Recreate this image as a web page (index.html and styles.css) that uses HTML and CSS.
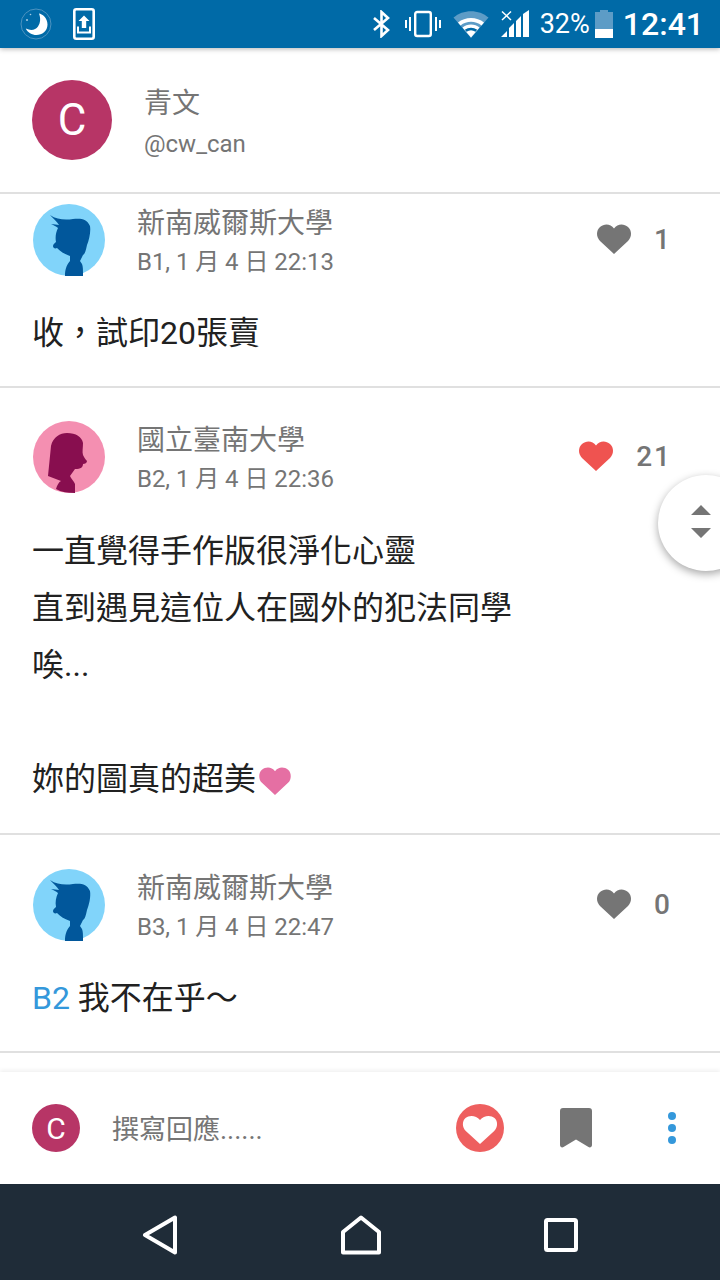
FILE: index.html
```html
<!DOCTYPE html>
<html lang="zh-Hant">

<head>
    <meta charset="UTF-8" />
    <meta name="viewport" content="width=device-width, initial-scale=1.0" />
    <title>青文</title>
    <link rel="stylesheet" href="styles.css">
</head>

<body>
    <div class="screen">
        <div class="status-bar">
            <div class="status-left">
                <svg class="ico-moon" width="32" height="32" viewBox="0 0 32 32">
                    <circle cx="16" cy="16" r="15" fill="none" stroke="#4d93c0" stroke-width="1" />
                    <path d="M19 5.5C22 6 27.5 9.5 27.5 16.5C27.5 23 22 27 16.5 27C12 27 7.500 24.500 5.800 20.500C11 23 15.500 22 18 18.500C20.500 15 20.800 10 19 5.500Z" fill="#fff" />
                    <circle cx="7" cy="12" r="1" fill="#a8cde3" />
                    <circle cx="10.500" cy="6.500" r="0.800" fill="#a8cde3" />
                </svg>
                <svg class="ico-upload" width="22" height="32" viewBox="0 0 22 32">
                    <rect x="1.300" y="1.300" width="19.400" height="29.400" rx="2" fill="none" stroke="#fff" stroke-width="2.600" />
                    <path d="M11 7.500L16.500 13H13.200V20H8.800V13H5.500Z" fill="#fff" />
                    <path d="M5 18.500V24.500H17V18.500" fill="none" stroke="#fff" stroke-width="2" />
                </svg>
            </div>
            <div class="status-right">
                <svg width="20" height="28" viewBox="0 0 20 28">
                    <path d="M2 8L16 20L9.500 26V2L16 8L2 20" fill="none" stroke="#fff" stroke-width="2.600" />
                </svg>
                <svg class="ico-vibrate" width="36" height="28" viewBox="0 0 36 28">
                    <rect x="10.200" y="2" width="15.600" height="24" rx="2" fill="none" stroke="#fff" stroke-width="2.400" />
                    <path d="M1 10V18M5 7V21M31 7V21M35 10V18" stroke="#fff" stroke-width="2" />
                </svg>
                <svg class="ico-wifi" width="36" height="28" viewBox="0 0 36 28">
                    <path d="M0.500 7.500C10 -1 26 -1 35.500 7.500L18 28Z" fill="#5d9cc6" />
                    <path d="M5 12.500C12 6.500 24 6.500 31 12.500L28.500 15.500C22.500 10.500 13.500 10.500 7.500 15.500Z" fill="#fff" />
                    <path d="M9.500 17.500C14 13.500 22 13.500 26.500 17.500L18 27.500Z" fill="#fff" />
                    <path d="M11.800 19.800C15.500 17 20.500 17 24.200 19.800L22.500 21.700C19.500 19.700 16.500 19.700 13.500 21.700Z" fill="#006aa7" />
                </svg>
                <svg class="ico-signal" width="30" height="28" viewBox="0 0 30 28">
                    <path d="M1 1.500L10 10M10 1.500L1 10" stroke="#fff" stroke-width="1.500" />
                    <path d="M0 27L6 21V27ZM8 27V18L13 13V27ZM15 27V11L20 6V27ZM22 27V4L28 0V27Z" fill="#fff" />
                </svg>
                <span class="battery-pct">32%</span>
                <div class="battery">
                    <div class="battery-cap"></div>
                    <div class="battery-body">
                        <div class="battery-level"></div>
                    </div>
                </div>
                <span class="clock">12:41</span>
            </div>
        </div>

        <div class="profile">
            <div class="avatar-letter avatar-big">C</div>
            <div class="profile-text">
                <div class="profile-name">青文</div>
                <div class="profile-handle">@cw_can</div>
            </div>
        </div>

        <div class="post post-first">
            <div class="post-head">
                <svg class="avatar" viewBox="0 0 72 72"><use href="#boy" /></svg>
                <div class="post-meta">
                    <div class="school">新南威爾斯大學</div>
                    <div class="stamp">B1, 1 月 4 日 22:13</div>
                </div>
                <div class="likes">
                    <svg class="heart" viewBox="0 0 34 30"><use href="#heart" /></svg>
                    <span class="like-count">1</span>
                </div>
            </div>
            <div class="post-body">收，試印20張賣</div>
        </div>

        <div class="post post-second">
            <div class="post-head">
                <svg class="avatar" viewBox="0 0 72 72"><use href="#girl" /></svg>
                <div class="post-meta">
                    <div class="school">國立臺南大學</div>
                    <div class="stamp">B2, 1 月 4 日 22:36</div>
                </div>
                <div class="likes liked">
                    <svg class="heart" viewBox="0 0 34 30"><use href="#heart" /></svg>
                    <span class="like-count">21</span>
                </div>
            </div>
            <div class="post-body">
                <p>一直覺得手作版很淨化心靈</p>
                <p>直到遇見這位人在國外的犯法同學</p>
                <p>唉...</p>
                <p>&nbsp;</p>
                <p>妳的圖真的超美<svg class="inline-heart" viewBox="0 0 34 30"><use href="#heart" /></svg></p>
            </div>
        </div>

        <div class="post post-third">
            <div class="post-head">
                <svg class="avatar" viewBox="0 0 72 72"><use href="#boy" /></svg>
                <div class="post-meta">
                    <div class="school">新南威爾斯大學</div>
                    <div class="stamp">B3, 1 月 4 日 22:47</div>
                </div>
                <div class="likes">
                    <svg class="heart" viewBox="0 0 34 30"><use href="#heart" /></svg>
                    <span class="like-count">0</span>
                </div>
            </div>
            <div class="post-body"><span class="ref">B2</span> 我不在乎～</div>
        </div>

        <div class="spacer"></div>

        <div class="reply-bar">
            <div class="avatar-letter avatar-small">C</div>
            <div class="reply-input">撰寫回應......</div>
            <svg class="reply-like" width="48" height="48" viewBox="0 0 48 48">
                <circle cx="24" cy="24" r="24" fill="#ee5f5f" />
                <path d="M24 40L9.800 27C6 23 6 17 9.500 14C13 11 20 11 24 16C28 11 35 11 38.500 14C42 17 42 23 38.200 27Z" fill="#fff" />
            </svg>
            <svg class="reply-save" width="32" height="40" viewBox="0 0 32 40">
                <path d="M3 0H29A3 3 0 0 1 32 3V37C32 39 30 40 28.500 39L16 31.500L3.500 39C2 40 0 39 0 37V3A3 3 0 0 1 3 0Z" fill="#757575" />
            </svg>
            <div class="reply-more">
                <span></span>
                <span></span>
                <span></span>
            </div>
        </div>

        <div class="nav-bar">
            <svg width="36" height="40" viewBox="0 0 36 40">
                <path d="M33 2.500V37.500L3 20Z" fill="none" stroke="#fff" stroke-width="4" stroke-linejoin="round" />
            </svg>
            <svg width="40" height="40" viewBox="0 0 40 40">
                <path d="M20 2.500L38 17V37.500H2V17Z" fill="none" stroke="#fff" stroke-width="4" stroke-linejoin="round" />
            </svg>
            <svg width="34" height="34" viewBox="0 0 34 34">
                <rect x="2" y="2" width="30" height="30" rx="1.500" fill="none" stroke="#fff" stroke-width="4" />
            </svg>
        </div>

        <div class="sort-button">
            <svg width="20" height="36" viewBox="0 0 20 36">
                <path d="M10 0L20 10H0ZM0 23H20L10 33Z" fill="#757575" />
            </svg>
        </div>
    </div>

    <svg class="sprites" width="0" height="0">
        <symbol id="heart" viewBox="0 0 34 30">
            <path d="M17 30L3 17C-1 13 -1 6.500 3 3C7 -0.500 13.500 -0.500 17 4.500C20.500 -0.500 27 -0.500 31 3C35 6.500 35 13 31 17Z" />
        </symbol>
        <symbol id="boy" viewBox="0 0 72 72">
            <circle cx="36" cy="36" r="36" fill="#81d4fa" />
            <path d="M17 11C24 16 33 16 40 15C48 14 54 15 57 22C58 28 56 36 54 41C53 46 52 50 50 51L47 57L49 60C50 62 50 66 50 72L32 72C32 66 33 62 37 57L37 52C31 50 27 47 24 44C22 45 20 44 20 42C20 40 22 39 23 38C22 33 23 28 25 24C23 22 20 21 18 20C21 20 24 21 26 21C24 18 20 14 17 11Z" fill="#01579b" />
        </symbol>
        <symbol id="girl" viewBox="0 0 72 72">
            <circle cx="36" cy="36" r="36" fill="#f48fb1" />
            <path d="M18 25C20 16 27 12 34 12C43 12 49 16 50 22C50 27 49 31 50 34C51 36 52 38 54 40C54 42 52 43 50 43C50 46 48 48 42 48L37 55C38 58 41 60 42 63L42 72C35 72 28 71 23 68C24 64 26 61 28 60L15 55C16 45 17 35 18 25Z" fill="#880e4f" />
        </symbol>
    </svg>
</body>

</html>
```

FILE: styles.css
```css
* {
    box-sizing: border-box;
}

body {
    margin: 0;
    font-family: Roboto, "Noto Sans CJK TC", sans-serif;
    background-color: #fff;
}

p {
    margin: 0;
}

.screen {
    position: relative;
    display: flex;
    flex-direction: column;
    width: 720px;
    height: 1280px;
    overflow: hidden;
}

.sprites {
    position: absolute;
}

/* status bar */
.status-bar {
    position: relative;
    z-index: 2;
    display: flex;
    flex: none;
    justify-content: space-between;
    align-items: center;
    height: 48px;
    padding: 0 16px 0 20px;
    color: #fff;
    background-color: #006aa7;
    box-shadow: 0 1px 5px rgba(0, 0, 0, 0.3);
}

.status-left,
.status-right {
    display: flex;
    align-items: center;
}

.status-left {
    gap: 21px;
}

.status-right {
    gap: 0;
}

.ico-vibrate {
    margin-left: 13px;
}

.ico-wifi {
    margin-left: 12px;
}

.ico-signal {
    margin-left: 12px;
}

.battery-pct {
    margin-left: 9px;
    font-size: 27px;
}

.battery {
    display: flex;
    flex-direction: column;
    align-items: center;
    width: 18px;
    height: 28px;
    margin-left: 5px;
}

.battery-cap {
    width: 8px;
    height: 2px;
    background-color: #5d9cc6;
}

.battery-body {
    display: flex;
    flex: 1;
    align-items: flex-end;
    width: 100%;
    background-color: #5d9cc6;
}

.battery-level {
    width: 100%;
    height: 9px;
    background-color: #fff;
}

.clock {
    margin-left: 10px;
    font-size: 32px;
    font-weight: 500;
}

/* profile */
.profile {
    display: flex;
    flex: none;
    align-items: center;
    height: 146px;
    padding-left: 32px;
    border-bottom: 2px solid #e0e0e0;
}

.avatar-letter {
    display: flex;
    flex: none;
    justify-content: center;
    align-items: center;
    border-radius: 50%;
    color: #fff;
    background-color: #b73566;
}

.avatar-big {
    width: 80px;
    height: 80px;
    font-size: 44px;
}

.avatar-small {
    width: 48px;
    height: 48px;
    font-size: 30px;
}

.profile-text {
    margin-left: 32px;
    padding-top: 4px;
    color: #757575;
}

.profile-name {
    font-size: 28px;
    line-height: 44px;
}

.profile-handle {
    font-size: 24px;
    line-height: 36px;
}

/* posts */
.post {
    flex: none;
    padding: 0 32px;
    border-bottom: 2px solid #e0e0e0;
}

.post-first {
    height: 194px;
    padding-top: 10px;
}

.post-second {
    height: 447px;
    padding-top: 33px;
}

.post-third {
    height: 218px;
    padding-top: 34px;
}

.post-head {
    display: flex;
    align-items: center;
    height: 72px;
}

.avatar {
    flex: none;
    width: 72px;
    height: 72px;
    margin-left: 1px;
}

.post-meta {
    flex: 1;
    margin-top: 5px;
    margin-left: 32px;
    color: #757575;
}

.school {
    font-size: 28px;
    line-height: 38px;
}

.stamp {
    font-size: 24px;
    line-height: 38px;
    letter-spacing: -0.05px;
}

.likes {
    display: flex;
    align-items: center;
    margin-right: 16px;
    margin-bottom: 2px;
    color: #757575;
    fill: #757575;
}

.liked {
    fill: #ef5350;
}

.heart {
    width: 34px;
    height: 30px;
}

.like-count {
    margin-left: 23px;
    font-size: 28px;
    font-weight: 500;
    letter-spacing: 2px;
}

.post-body {
    margin-top: 29px;
    font-size: 32px;
    line-height: 57px;
    color: #212121;
}

.post-second .post-body {
    margin-top: 30px;
}

.inline-heart {
    width: 34px;
    height: 28px;
    margin-left: 2px;
    vertical-align: -5px;
    fill: #e56fa3;
}

.ref {
    color: #3498db;
}

.spacer {
    flex: 1;
}

/* reply bar */
.reply-bar {
    position: relative;
    display: flex;
    flex: none;
    align-items: center;
    height: 112px;
    padding: 0 32px;
    box-shadow: 0 -2px 4px rgba(0, 0, 0, 0.06);
}

.reply-input {
    flex: 1;
    margin-bottom: 2px;
    margin-left: 32px;
    font-size: 27px;
    color: #757575;
}

.reply-save {
    margin-left: 56px;
}

.reply-more {
    display: flex;
    flex-direction: column;
    gap: 4px;
    margin-left: 76px;
    margin-right: 12px;
}

.reply-more span {
    width: 8px;
    height: 8px;
    border-radius: 50%;
    background-color: #3498db;
}

/* android nav */
.nav-bar {
    display: flex;
    flex: none;
    justify-content: center;
    align-items: center;
    gap: 163px;
    height: 96px;
    padding-top: 6px;
    background-color: #1f2c38;
}

/* floating sort button */
.sort-button {
    position: absolute;
    top: 475px;
    left: 658px;
    display: flex;
    align-items: center;
    width: 96px;
    height: 96px;
    padding-left: 33px;
    border-radius: 50%;
    background-color: #fff;
    box-shadow: 0 3px 8px rgba(0, 0, 0, 0.35);
}
```
